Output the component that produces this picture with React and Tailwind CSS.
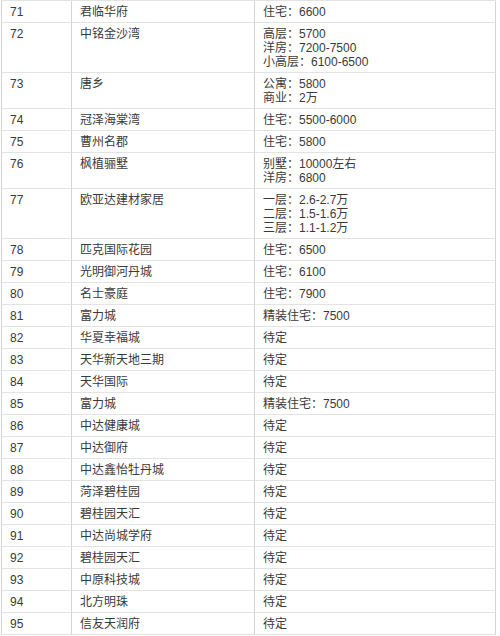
import React from 'react';

const rows = [
  ['71', '君临华府', ['住宅：6600']],
  ['72', '中铭金沙湾', ['高层：5700', '洋房：7200-7500', '小高层：6100-6500']],
  ['73', '唐乡', ['公寓：5800', '商业：2万']],
  ['74', '冠泽海棠湾', ['住宅：5500-6000']],
  ['75', '曹州名郡', ['住宅：5800']],
  ['76', '枫植骊墅', ['别墅：10000左右', '洋房：6800']],
  ['77', '欧亚达建材家居', ['一层：2.6-2.7万', '二层：1.5-1.6万', '三层：1.1-1.2万']],
  ['78', '匹克国际花园', ['住宅：6500']],
  ['79', '光明御河丹城', ['住宅：6100']],
  ['80', '名士豪庭', ['住宅：7900']],
  ['81', '富力城', ['精装住宅：7500']],
  ['82', '华夏幸福城', ['待定']],
  ['83', '天华新天地三期', ['待定']],
  ['84', '天华国际', ['待定']],
  ['85', '富力城', ['精装住宅：7500']],
  ['86', '中达健康城', ['待定']],
  ['87', '中达御府', ['待定']],
  ['88', '中达鑫怡牡丹城', ['待定']],
  ['89', '菏泽碧桂园', ['待定']],
  ['90', '碧桂园天汇', ['待定']],
  ['91', '中达尚城学府', ['待定']],
  ['92', '碧桂园天汇', ['待定']],
  ['93', '中原科技城', ['待定']],
  ['94', '北方明珠', ['待定']],
  ['95', '信友天润府', ['待定']],
];

const cell = 'border-r border-b border-r-[#d4d4d4] border-b-[#e3e3e3] pt-[4px] pb-[3px] pl-[8px] leading-[14px]';

const App = () => {
  return (
    <div
      className="w-[500px] h-[636px] overflow-hidden bg-white text-[12px] text-[#3a3a3a]"
      style={{ fontFamily: '"Liberation Sans", "Noto Sans CJK SC", sans-serif' }}
    >
      <div className="ml-px w-[495px] grid grid-cols-[71px_183px_241px] border-t border-[#e3e3e3]">
        {rows.map(([num, name, prices]) => (
          <React.Fragment key={num}>
            <div className={`${cell} border-l border-l-[#d4d4d4]`}>{num}</div>
            <div className={cell}>{name}</div>
            <div className={cell}>
              {prices.map(p => (
                <div key={p}>{p}</div>
              ))}
            </div>
          </React.Fragment>
        ))}
      </div>
    </div>
  );
};

export default App;
